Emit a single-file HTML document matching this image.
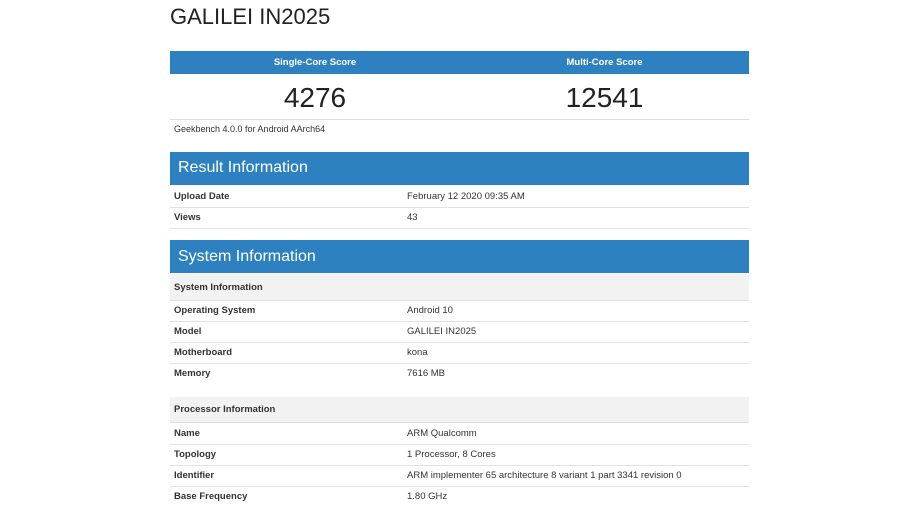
<!DOCTYPE html><html><head><style>
body{margin:0;background:#fff;font-family:"Liberation Sans",Arial,sans-serif;color:#222;width:900px;height:506px;overflow:hidden;position:relative}
.a{position:absolute}
.c{left:170px;width:579px}
.bar{background:#2e81c0;color:#fff}
.row{position:absolute;left:170px;width:579px;height:21px;border-bottom:1px solid #e2e2e2;font-size:9.5px}
.row b{position:absolute;left:4px;top:5px;font-weight:bold;color:#333}
.row span{position:absolute;left:237px;top:5px;color:#333}
.sub{position:absolute;left:170px;width:579px;background:#f2f2f2;font-size:9.5px;font-weight:bold;color:#333;border-bottom:1px solid #dde}
</style></head><body>
<div class="a" style="left:170px;top:4px;font-size:22px;color:#222">GALILEI IN2025</div>
<div class="a c bar" style="top:51px;height:23px;font-size:9.5px;font-weight:bold">
<div class="a" style="left:0;width:290px;top:6px;text-align:center">Single-Core Score</div>
<div class="a" style="left:290px;width:289px;top:6px;text-align:center">Multi-Core Score</div></div>
<div class="a" style="left:170px;width:290px;top:82px;text-align:center;font-size:28px">4276</div>
<div class="a" style="left:460px;width:289px;top:82px;text-align:center;font-size:28px">12541</div>
<div class="a c" style="top:119px;border-top:1px solid #ddd"></div>
<div class="a" style="left:174px;top:124px;font-size:9px;color:#333">Geekbench 4.0.0 for Android AArch64</div>
<div class="a c bar" style="top:152px;height:33px;font-size:16px"><div class="a" style="left:8px;top:7px">Result Information</div></div>
<div class="row" style="top:186px"><b>Upload Date</b><span>February 12 2020 09:35 AM</span></div>
<div class="row" style="top:207px"><b>Views</b><span>43</span></div>
<div class="a c bar" style="top:240px;height:33px;font-size:16px"><div class="a" style="left:8px;top:8px">System Information</div></div>
<div class="sub" style="top:274px;height:26px"><div class="a" style="left:4px;top:8px">System Information</div></div>
<div class="row" style="top:300px"><b>Operating System</b><span>Android 10</span></div>
<div class="row" style="top:321px"><b>Model</b><span>GALILEI IN2025</span></div>
<div class="row" style="top:342px"><b>Motherboard</b><span>kona</span></div>
<div class="row" style="top:363px;border:none"><b>Memory</b><span>7616 MB</span></div>
<div class="sub" style="top:397px;height:25px"><div class="a" style="left:4px;top:7px">Processor Information</div></div>
<div class="row" style="top:423px"><b>Name</b><span>ARM Qualcomm</span></div>
<div class="row" style="top:444px"><b>Topology</b><span>1 Processor, 8 Cores</span></div>
<div class="row" style="top:465px"><b>Identifier</b><span>ARM implementer 65 architecture 8 variant 1 part 3341 revision 0</span></div>
<div class="row" style="top:486px;border:none"><b>Base Frequency</b><span>1.80 GHz</span></div>
</body></html>
